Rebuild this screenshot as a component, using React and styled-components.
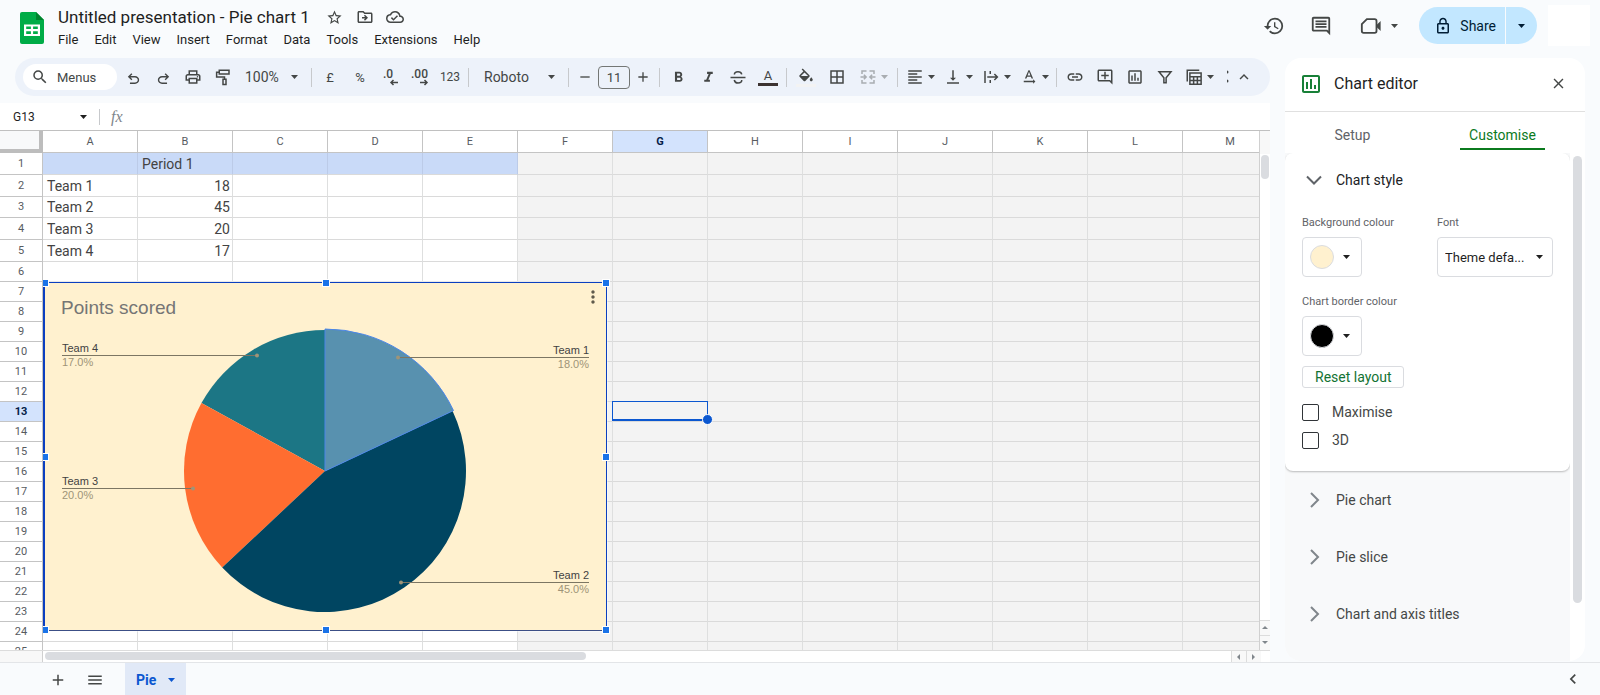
import React from 'react';
import styled, { createGlobalStyle } from 'styled-components';
import {
  MdStarBorder,
  MdOutlineDriveFileMove,
  MdOutlineCloudDone,
  MdSearch,
  MdOutlinePrint,
  MdFormatBold,
  MdFormatItalic,
  MdBorderAll,
  MdFormatAlignLeft,
  MdVerticalAlignBottom,
  MdTextRotationNone,
  MdLink,
  MdOutlineAddComment,
  MdOutlineInsertChart,
  MdHistory,
  MdOutlineComment,
  MdLockOutline,
  MdClose,
  MdAdd,
  MdRemove,
  MdMenu,
  MdMoreVert,
  MdKeyboardArrowUp,
  MdKeyboardArrowLeft,
} from 'react-icons/md';

const GlobalStyle = createGlobalStyle`
  * {
    box-sizing: border-box;
  }
  body {
    margin: 0;
    background: #f9fbfd;
    color: #1f1f1f;
    font-family: Roboto, "Liberation Sans", sans-serif;
    font-size: 13px;
  }
  button, input, select {
    font: inherit;
    color: inherit;
    margin: 0;
    padding: 0;
    border: none;
    background: none;
  }
  svg {
    display: block;
    flex: none;
  }
`

const Shell = styled.div`
  display: flex;
  flex-direction: column;
  height: 100vh;
  overflow: hidden;
`

/* ---------- top bar ---------- */

const Header = styled.header`
  display: flex;
  flex: none;
  height: 58px;
  padding: 4px 10px 0 20px;
`
const Logo = styled.a`
  padding-top: 8px;
  margin-right: 14px;
`
const TitleArea = styled.div`
  flex: 1;
`
const TitleRow = styled.div`
  display: flex;
  align-items: center;
  height: 26px;
`
const DocTitle = styled.h1`
  margin: 0 10px 0 0;
  font-size: 17px;
  font-weight: 400;
  line-height: 24px;
`
const TitleButton = styled.button`
  display: flex;
  justify-content: center;
  width: 30px;
  color: #444746;
`
const MenuBar = styled.nav`
  display: flex;
  gap: 16px;
  line-height: 20px;
`
const Actions = styled.div`
  display: flex;
  align-items: center;
  height: 43px;
`
const Action = styled.button`
  display: flex;
  align-items: center;
  justify-content: ${props => props.$menu ? 'flex-end' : 'center'};
  gap: 9px;
  width: ${props => props.$menu ? 54 : 47}px;
  color: #444746;
`
const Share = styled.div`
  display: flex;
  height: 37px;
  margin-left: 21px;
  border-radius: 19px;
  overflow: hidden;
  gap: 1px;
  color: #001d35;
  button {
    display: flex;
    align-items: center;
    background: #c2e7ff;
    font-size: 14px;
  }
  button:first-child {
    gap: 8px;
    padding: 0 9px 0 15px;
  }
  button:last-child {
    padding: 0 12px;
  }
`
const Account = styled.div`
  width: 42px;
  height: 41px;
  margin-left: 11px;
  background: #fff;
`

/* ---------- toolbar ---------- */

const Body = styled.div`
  display: flex;
  flex: 1;
  min-height: 0;
  gap: 15px;
  padding-right: 15px;
`
const Main = styled.main`
  display: flex;
  flex-direction: column;
  flex: 1;
  min-width: 0;
`
const Toolbar = styled.div`
  display: flex;
  flex: none;
  align-items: center;
  height: 38px;
  margin: 0 0 7px 15px;
  padding: 0 11px 0 8px;
  border-radius: 19px;
  background: #edf2fa;
  color: #444746;
`
const MenuSearch = styled.button`
  display: flex;
  align-items: center;
  gap: 8px;
  width: 94px;
  height: 26px;
  margin-right: 1px;
  padding-left: 8px;
  border-radius: 13px;
  background: #fff;
`
const Tool = styled.button`
  display: flex;
  align-items: center;
  justify-content: center;
  gap: 4px;
  width: ${props => props.$width || 30}px;
  height: 26px;
  font-size: ${props => props.$small ? 12 : 13}px;
  opacity: ${props => props.disabled ? 0.4 : 1};
`
const ColourTool = styled(Tool)`
  flex-direction: column;
  gap: 0;
  &::after {
    content: '';
    width: 20px;
    height: 3px;
    background: ${props => props.$colour};
  }
`
const Divider = styled.span`
  width: 1px;
  height: 19px;
  margin: 0 3px;
  background: #c7c9cc;
`
const SelectBox = styled.span`
  position: relative;
  display: flex;
  width: ${props => props.$width}px;
  select {
    width: 100%;
    height: ${props => props.$height || 26}px;
    padding-left: ${props => props.$pad}px;
    border: ${props => props.$framed ? '1px solid #dadce0' : 'none'};
    border-radius: 4px;
    font-size: ${props => props.$framed ? 13 : 14}px;
    appearance: none;
  }
  svg {
    position: absolute;
    top: calc(50% - 2px);
    right: 10px;
    pointer-events: none;
  }
`
const SizeInput = styled.input`
  width: 32px;
  height: 23px;
  border: 1px solid #747775;
  border-radius: 4px;
  text-align: center;
`
const ToolbarEnd = styled.div`
  display: flex;
  align-items: center;
  margin-left: auto;
`
const Clipped = styled.span`
  display: flex;
  width: 2px;
  height: 16px;
  overflow: hidden;
`

/* ---------- formula bar and grid ---------- */

const FormulaBar = styled.div`
  display: flex;
  flex: none;
  align-items: center;
  height: 27px;
  padding-left: 13px;
  background: #fff;
`
const NameBox = styled.input`
  width: 67px;
  font-size: 12px;
`
const FormulaLabel = styled.label`
  display: flex;
  flex: 1;
  align-items: center;
  height: 16px;
  margin-left: 12px;
  padding-left: 11px;
  border-left: 1px solid #c7c9cc;
  color: #80868b;
  font: italic 16px "Liberation Serif", serif;
  input {
    flex: 1;
    margin-left: 12px;
  }
`
const GridArea = styled.div`
  display: flex;
  flex: 1;
  min-height: 0;
  border-top: 1px solid #c0c0c0;
  background: #fff;
`
const GridView = styled.div`
  position: relative;
  flex: 1;
  overflow: hidden;
  border-right: 1px solid #d0d0d0;
`
const Sheet = styled.table`
  width: ${props => props.$width}px;
  table-layout: fixed;
  border-collapse: separate;
  border-spacing: 0;
`
const Corner = styled.td`
  height: 22px;
  padding: 0;
  border-right: 4px solid #bdbdbd;
  border-bottom: 4px solid #bdbdbd;
  background: #f8f9fa;
`
const HeadCell = styled.th`
  padding: 0;
  border-right: 1px solid #c4c4c4;
  border-bottom: 1px solid #c4c4c4;
  background: ${props => props.$active ? '#d3e3fd' : '#fff'};
  color: ${props => props.$active ? '#041e49' : '#575b5f'};
  font-size: 11px;
  font-weight: ${props => props.$active ? 700 : 400};
  line-height: 16px;
`
const Cell = styled.td`
  position: relative;
  padding: 0 2px 0 4px;
  border-right: 1px solid ${props => props.$fill === '#c9daf8' ? '#bccbe8' : '#dedfdf'};
  border-bottom: 1px solid #dadada;
  background: ${props => props.$fill};
  color: #434343;
  font-size: 14px;
  line-height: 16px;
  text-align: ${props => props.$number ? 'right' : 'left'};
  white-space: nowrap;
`
const Selection = styled.div`
  position: absolute;
  z-index: 1;
  inset: -1px -1px 0 -1px;
  border: 1px solid #0b57d0;
  border-bottom-width: 2px;
  &::after {
    content: '';
    position: absolute;
    right: -6px;
    bottom: -6px;
    width: 9px;
    height: 9px;
    border: 1px solid #fff;
    border-radius: 50%;
    background: #0b57d0;
  }
`
const VerticalTrack = styled.div`
  display: flex;
  flex-direction: column;
  width: 10px;
  border-top: 23px solid #f8f8f8;
`
const Thumb = styled.div`
  width: ${props => props.$width};
  height: ${props => props.$height};
  margin: ${props => props.$margin};
  border-radius: 5px;
  background: #dadce0;
`
const Steps = styled.div`
  display: flex;
  flex-direction: ${props => props.$column ? 'column' : 'row'};
  margin-${props => props.$column ? 'top' : 'left'}: auto;
  button {
    display: flex;
    align-items: center;
    justify-content: center;
    width: ${props => props.$column ? 10 : 15}px;
    height: ${props => props.$column ? 15 : 11}px;
    border: 1px solid #dcdcdc;
    border-width: ${props => props.$column ? '1px 0 0' : '0 0 0 1px'};
    background: #f8f8f8;
  }
`
const HorizontalTrack = styled.div`
  display: flex;
  flex: none;
  height: 12px;
  padding-right: 9px;
  border-top: 1px solid #dcdcdc;
  background: #fff;
`
const TrackCorner = styled.div`
  width: 43px;
  border-right: 1px solid #d0d0d0;
  background: #f8f8f8;
`

/* ---------- chart placed on the sheet ---------- */

const FloatLayer = styled.div`
  position: absolute;
  inset: 23px 0 0 43px;
  overflow: hidden;
  pointer-events: none;
`
const ChartFrame = styled.figure`
  position: absolute;
  top: 128px;
  left: 0;
  width: 564px;
  height: 349px;
  margin: 0;
  border: 1px solid #0b3fc0;
  border-left-width: 2px;
  border-bottom-color: #3c4f86;
  box-shadow: 0 0 0 1px #ffffff66;
  background: #fff1cf;
`
const Handle = styled.span`
  position: absolute;
  left: calc(${props => props.$x} - 4px);
  top: calc(${props => props.$y} - 4px);
  width: 8px;
  height: 8px;
  border: 1px solid #fff;
  background: #1a73e8;
`
const ChartMenu = styled.button`
  position: absolute;
  top: 4px;
  right: 3px;
  color: #5f5a4c;
`

/* ---------- chart editor ---------- */

const Panel = styled.aside`
  display: flex;
  flex-direction: column;
  flex: none;
  width: 300px;
  margin-bottom: 1px;
  border-radius: 16px;
  background: #fff;
  overflow: hidden;
`
const PanelHead = styled.div`
  display: flex;
  flex: none;
  align-items: center;
  height: 54px;
  padding: 0 18px 2px 14px;
  border-bottom: 1px solid #e0e0e0;
  color: #188038;
  h2 {
    flex: 1;
    margin: 0 0 0 11px;
    color: #1f1f1f;
    font-size: 16px;
    font-weight: 400;
  }
  button {
    color: #444746;
  }
`
const Tabs = styled.div`
  display: flex;
  flex: none;
  gap: 15px;
  height: 41px;
  padding-right: 15px;
`
const Tab = styled.button`
  flex: 1;
  padding-bottom: 3px;
  color: ${props => props.$active ? '#0b7a1e' : '#5f6368'};
  font-size: 14px;
  span {
    display: inline-block;
    padding: 15px 9px 5px;
    border-bottom: 2px solid ${props => props.$active ? '#0b7a1e' : 'transparent'};
    line-height: 16px;
  }
`
const PanelScroll = styled.div`
  display: flex;
  flex: 1;
  min-height: 0;
`
const Sections = styled.div`
  flex: 1;
  overflow: hidden;
  background: #f8f9fa;
`
const Card = styled.section`
  padding: 0 17px 17px;
  border-radius: 8px;
  background: #fff;
  box-shadow: 0 1px 2px #00000040;
`
const SectionButton = styled.button`
  display: flex;
  align-items: center;
  gap: 14px;
  width: 100%;
  height: ${props => props.$open ? 53 : 57}px;
  padding-left: ${props => props.$open ? 4 : 21}px;
  color: ${props => props.$open ? '#202124' : '#444746'};
  font-size: 14px;
`
const Fields = styled.div`
  display: grid;
  grid-template-columns: 1fr 116px;
  row-gap: 17px;
  padding-top: 9px;
`
const Field = styled.div`
  display: flex;
  flex-direction: column;
  gap: 6px;
  label {
    color: #5f6368;
    font-size: 11px;
    line-height: 16px;
  }
`
const Swatch = styled.button`
  display: flex;
  align-items: center;
  justify-content: space-between;
  width: 60px;
  height: 40px;
  padding: 0 11px 0 7px;
  border: 1px solid #dadce0;
  border-radius: 4px;
  &::before {
    content: '';
    width: 22px;
    height: 22px;
    border: 1px solid #dadce0;
    border-radius: 50%;
    background: ${props => props.$colour};
  }
`
const ResetButton = styled.button`
  height: 22px;
  margin: 10px 0;
  padding: 0 12px;
  border: 1px solid #dadce0;
  border-radius: 3px;
  color: #137333;
  font-size: 14px;
  line-height: 18px;
`
const CheckRow = styled.label`
  display: flex;
  align-items: center;
  gap: 13px;
  height: 28px;
  color: #444746;
  font-size: 14px;
  input {
    width: 17px;
    height: 17px;
    border: 1px solid #303438;
    border-radius: 2px;
    appearance: none;
  }
`

/* ---------- sheet tabs ---------- */

const Footer = styled.footer`
  display: flex;
  flex: none;
  align-items: center;
  height: 33px;
  padding: 0 17px 0 39px;
  border-top: 1px solid #e3e5e8;
  color: #444746;
`
const FootButton = styled.button`
  display: flex;
  justify-content: center;
  width: 37px;
  padding-top: 2px;
`
const SheetTab = styled.button`
  display: flex;
  align-items: center;
  gap: 12px;
  align-self: stretch;
  margin: 0 auto 0 12px;
  padding: 2px 11px 0;
  background: #e1e9f7;
  color: #0b57d0;
  font-size: 14px;
  font-weight: 700;
`

const Caret = () => (
  <svg width="7" height="4" viewBox="0 0 7 4" fill="currentColor"><path d="M0 0h7L3.500 4z" /></svg>
);

// 24px outline drawings that the icon set has no match for
const Stroke = ({ size = 18, width = 2, children }) => (
  <svg width={size} height={size} viewBox="0 0 24 24" fill="none" stroke="currentColor" strokeWidth={width}>
    {children}
  </svg>
);

const SheetsLogo = () => (
  <svg width="24" height="33" viewBox="0 0 24 33">
    <path d="M2 0h14l8 8v22a2 2 0 0 1-2 2H2a2 2 0 0 1-2-2V2a2 2 0 0 1 2-2z" fill="#00ac47" />
    <path d="M16 0l8 8h-8z" fill="#00832d" />
    <path d="M4 12.500h16v11.500H4zM6.200 14.500v2.600h4.700v-2.600zM13.100 14.500v2.600h4.700v-2.600zM6.200 19.300v2.600h4.700v-2.600zM13.100 19.300v2.600h4.700v-2.600z" fill="#fff" fillRule="evenodd" />
  </svg>
);

const UndoIcon = () => (
  <svg width="17" height="17" viewBox="0 -1040 960 960" fill="currentColor">
    <path d="M280-200v-80h284q63 0 109.500-40T720-420q0-60-46.500-100T564-560H312l104 104-56 56-200-200 200-200 56 56-104 104h252q97 0 169.500 63T800-420q0 94-72.500 157T564-200H280Z" />
  </svg>
);

const RedoIcon = () => (
  <svg width="17" height="17" viewBox="0 -1040 960 960" fill="currentColor">
    <path d="M680-200v-80H396q-63 0-109.500-40T240-420q0-60 46.500-100T396-560h252L544-456l56 56 200-200-200-200-56 56 104 104H396q-97 0-169.500 63T160-420q0 94 72.500 157T396-200h284Z" />
  </svg>
);

const PaintIcon = () => (
  <Stroke>
    <path d="M7 3h13v5H7zM7 5.500H3.500V12H14v3M12 15h4v7h-4z" />
  </Stroke>
);

const DecimalIcon = ({ digits, right }) => (
  <svg width="20" height="20" viewBox="0 0 20 20">
    <text x={right ? 1 : 3} y="11" fontSize="12" fontWeight="500" fill="currentColor">{digits}</text>
    <path
      d={right ? 'M10 15.500h7M14.500 13l2.500 2.500-2.500 2.500' : 'M11 15.500h7M13.500 13L11 15.500l2.500 2.500'}
      fill="none" stroke="currentColor" strokeWidth="1.500"
    />
  </svg>
);

const StrikeIcon = () => (
  <Stroke>
    <path d="M2 12.500h20M17 8.500c-.5-2.300-2.300-3.500-5-3.500-3 0-4.800 1.500-4.800 3.800M7 16c.5 2.500 2.300 4 5 4 3 0 5-1.500 5-4" />
  </Stroke>
);

const FillIcon = () => (
  <svg width="18" height="16" viewBox="0 0 24 20" fill="currentColor">
    <path d="M16.560 8.940L7.620 0 6.210 1.410l2.380 2.380-5.150 5.150a1.490 1.490 0 0 0 0 2.120l5.500 5.500c.29.29.68.44 1.060.44s.77-.15 1.060-.44l5.500-5.500c.59-.58.59-1.530 0-2.120zM5.210 10L10 5.210 14.790 10zM19 11.500s-2 2.170-2 3.500c0 1.100.9 2 2 2s2-.9 2-2c0-1.330-2-3.500-2-3.500z" />
  </svg>
);

const MergeIcon = () => (
  <Stroke>
    <path d="M10 4H4v4M4 16v4h6M14 4h6v4M20 16v4h-6M2 12h7M15 12h7M6.500 9l3 3-3 3M17.500 9l-3 3 3 3" />
  </Stroke>
);

const WrapIcon = () => (
  <Stroke>
    <path d="M4 4v16M11 4v4M11 16v4M7 12h13M16.500 8l4 4-4 4" />
  </Stroke>
);

const FilterIcon = () => (
  <Stroke>
    <path d="M4 5h16l-6.500 8v6.500h-3V13z" />
  </Stroke>
);

const TableIcon = () => (
  <Stroke>
    <path d="M3 18V3h16M6.500 6.500h15v15h-15zM6.500 11.500h15M6.500 16.500h15M11.500 11.500v10M16.500 11.500v10" />
  </Stroke>
);

const VideoIcon = () => (
  <svg width="22" height="22" viewBox="0 0 24 24">
    <path d="M7.500 4.500H16a2 2 0 0 1 2 2v11a2 2 0 0 1-2 2H4a2 2 0 0 1-2-2V10z" fill="none" stroke="currentColor" strokeWidth="2" />
    <path d="M18 11l4.500-4.500v11L18 13z" fill="currentColor" />
  </svg>
);

const Chevron = ({ open }) => (
  <svg width="16" height="16" viewBox="0 0 16 16" fill="none" stroke={open ? '#5f6368' : '#80868b'} strokeWidth="2">
    <path d={open ? 'M1 4.500l7 7 7-7' : 'M5 1l7 7-7 7'} />
  </svg>
);

const Arrow = ({ dir }) => {
  const paths = {
    up: 'M0 4l3-3 3 3z',
    down: 'M0 1l3 3 3-3z',
    left: 'M4 0L1 3l3 3z',
    right: 'M1 0l3 3-3 3z',
  };
  return <svg width="6" height="6" viewBox="0 0 6 6" fill="#80868b"><path d={paths[dir]} /></svg>;
};

const COLUMNS = 'ABCDEFGHIJKLM'.split('');
const ROWS = Array.from({ length: 25 }, (_, i) => i + 1);
const ROW_HEIGHTS = { 1: 22, 2: 22, 3: 21, 4: 22, 5: 22 };

const VALUES = {
  B1: 'Period 1',
  A2: 'Team 1', B2: 18,
  A3: 'Team 2', B3: 45,
  A4: 'Team 3', B4: 20,
  A5: 'Team 4', B5: 17,
};

const SLICES = [
  { name: 'Team 1', value: 18, fill: '#5891af', dotX: 353, y: 75, right: true },
  { name: 'Team 2', value: 45, fill: '#004561', dotX: 356, y: 300, right: true },
  { name: 'Team 3', value: 20, fill: '#ff6d30', dotX: 148, y: 206 },
  { name: 'Team 4', value: 17, fill: '#1c7685', dotX: 212, y: 73 },
];

const cellFill = (col, row) => {
  if (col > 4) return '#f3f3f3';
  return row === 1 ? '#c9daf8' : '#fff';
};

const slicePath = (from, to, r) => {
  const point = share => {
    const angle = share / 100 * 2 * Math.PI;
    return `${280 + r * Math.sin(angle)} ${188 - r * Math.cos(angle)}`;
  };
  return `M280 188L${point(from)}A${r} ${r} 0 0 1 ${point(to)}Z`;
};

const PieChart = () => {
  let start = 0;
  const slices = SLICES.map(slice => {
    const from = start;
    start += slice.value;
    return { ...slice, from, to: start };
  });
  return (
    <svg width="561" height="347" viewBox="0 0 561 347" fontFamily="Liberation Sans, Arial, sans-serif" role="img" aria-label="Points scored">
      <text x="16" y="31" fontSize="19" fill="#757575">Points scored</text>
      {slices.slice().reverse().map(s => (
        <path
          key={s.name}
          d={slicePath(s.from, s.to, s.from === 0 ? 142 : 141)}
          fill={s.fill}
          stroke={s.from === 0 ? '#4c86e8' : 'none'}
        />
      ))}
      {slices.map(s => {
        const edge = s.right ? 544 : 17;
        const anchor = s.right ? 'end' : 'start';
        return (
          <g key={s.name} fontSize="11" textAnchor={anchor}>
            <path d={`M${edge} ${s.y - 0.5}H${s.dotX}`} stroke="#7c7663" />
            <circle cx={s.dotX} cy={s.y - 0.5} r="2" fill="#9e9478" />
            <text x={edge} y={s.y - 4} fill="#424242">{s.name}</text>
            <text x={edge} y={s.y + 10} fill="#9e9478">{s.value.toFixed(1)}%</text>
          </g>
        );
      })}
    </svg>
  );
}

const Chart = () => (
  <FloatLayer>
    <ChartFrame>
      <PieChart />
      <ChartMenu aria-label="Chart options"><MdMoreVert size={20} /></ChartMenu>
      {['0%', '50%', '100%'].map(y => ['0%', '50%', '100%'].map(x => (
        x === '50%' && y === '50%' ? null : <Handle key={x + y} $x={x} $y={y} />
      )))}
    </ChartFrame>
  </FloatLayer>
);

const Spreadsheet = () => (
  <GridArea>
    <GridView>
      <Sheet $width={43 + COLUMNS.length * 95}>
        <colgroup>
          <col width="43" />
          {COLUMNS.map(c => <col key={c} width="95" />)}
        </colgroup>
        <thead>
          <tr>
            <Corner />
            {COLUMNS.map(c => <HeadCell key={c} scope="col" $active={c === 'G'}>{c}</HeadCell>)}
          </tr>
        </thead>
        <tbody>
          {ROWS.map(row => (
            <tr key={row} height={ROW_HEIGHTS[row] || 20}>
              <HeadCell scope="row" $active={row === 13}>{row}</HeadCell>
              {COLUMNS.map((c, i) => {
                const value = VALUES[c + row];
                return (
                  <Cell key={c} $fill={cellFill(i, row)} $number={typeof value === 'number'}>
                    {value}
                    {c === 'G' && row === 13 && <Selection />}
                  </Cell>
                );
              })}
            </tr>
          ))}
        </tbody>
      </Sheet>
      <Chart />
    </GridView>
    <VerticalTrack>
      <Thumb $width="8px" $height="24px" $margin="1px" />
      <Steps $column>
        <button aria-label="Scroll up"><Arrow dir="up" /></button>
        <button aria-label="Scroll down"><Arrow dir="down" /></button>
      </Steps>
    </VerticalTrack>
  </GridArea>
);

const MENUS = ['File', 'Edit', 'View', 'Insert', 'Format', 'Data', 'Tools', 'Extensions', 'Help'];

const TopBar = () => (
  <Header>
    <Logo href="#" aria-label="Sheets home"><SheetsLogo /></Logo>
    <TitleArea>
      <TitleRow>
        <DocTitle>Untitled presentation - Pie chart 1</DocTitle>
        <TitleButton aria-label="Star"><MdStarBorder size={17} /></TitleButton>
        <TitleButton aria-label="Move"><MdOutlineDriveFileMove size={18} /></TitleButton>
        <TitleButton aria-label="Saved to Drive"><MdOutlineCloudDone size={18} /></TitleButton>
      </TitleRow>
      <MenuBar>
        {MENUS.map(m => <button key={m}>{m}</button>)}
      </MenuBar>
    </TitleArea>
    <Actions>
      <Action aria-label="Version history"><MdHistory size={22} /></Action>
      <Action aria-label="Comments"><MdOutlineComment size={22} /></Action>
      <Action aria-label="Join a call" $menu><VideoIcon /><Caret /></Action>
      <Share>
        <button><MdLockOutline size={18} />Share</button>
        <button aria-label="Sharing options"><Caret /></button>
      </Share>
      <Account />
    </Actions>
  </Header>
);

const MainToolbar = () => (
  <Toolbar role="toolbar">
    <MenuSearch><MdSearch size={18} />Menus</MenuSearch>
    <Tool aria-label="Undo"><UndoIcon /></Tool>
    <Tool aria-label="Redo"><RedoIcon /></Tool>
    <Tool aria-label="Print"><MdOutlinePrint size={18} /></Tool>
    <Tool aria-label="Paint format"><PaintIcon /></Tool>
    <SelectBox $width={70} $pad={7}>
      <select aria-label="Zoom"><option>100%</option></select>
      <Caret />
    </SelectBox>
    <Divider />
    <Tool>£</Tool>
    <Tool>%</Tool>
    <Tool aria-label="Decrease decimal places"><DecimalIcon digits=".0" /></Tool>
    <Tool aria-label="Increase decimal places"><DecimalIcon digits=".00" right /></Tool>
    <Tool $small>123</Tool>
    <Divider />
    <SelectBox $width={93} $pad={12}>
      <select aria-label="Font"><option>Roboto</option></select>
      <Caret />
    </SelectBox>
    <Divider />
    <Tool aria-label="Decrease font size" $width={26}><MdRemove size={16} /></Tool>
    <SizeInput aria-label="Font size" defaultValue="11" />
    <Tool aria-label="Increase font size" $width={26}><MdAdd size={16} /></Tool>
    <Divider />
    <Tool aria-label="Bold"><MdFormatBold size={17} /></Tool>
    <Tool aria-label="Italic"><MdFormatItalic size={17} /></Tool>
    <Tool aria-label="Strikethrough"><StrikeIcon /></Tool>
    <ColourTool $colour="#3c3331">A</ColourTool>
    <Divider />
    <ColourTool aria-label="Fill colour" $colour="#f3f3f3" $width={32}><FillIcon /></ColourTool>
    <Tool aria-label="Borders"><MdBorderAll size={18} /></Tool>
    <Tool aria-label="Merge cells" $width={42} disabled><MergeIcon /><Caret /></Tool>
    <Divider />
    <Tool aria-label="Horizontal align" $width={38}><MdFormatAlignLeft size={18} /><Caret /></Tool>
    <Tool aria-label="Vertical align" $width={38}><MdVerticalAlignBottom size={18} /><Caret /></Tool>
    <Tool aria-label="Text wrapping" $width={38}><WrapIcon /><Caret /></Tool>
    <Tool aria-label="Text rotation" $width={38}><MdTextRotationNone size={18} /><Caret /></Tool>
    <Divider />
    <Tool aria-label="Insert link"><MdLink size={18} /></Tool>
    <Tool aria-label="Insert comment"><MdOutlineAddComment size={18} /></Tool>
    <Tool aria-label="Insert chart"><MdOutlineInsertChart size={18} /></Tool>
    <Tool aria-label="Create a filter"><FilterIcon /></Tool>
    <Tool aria-label="Filter views" $width={38}><TableIcon /><Caret /></Tool>
    <ToolbarEnd>
      <Clipped>
        <svg width="4" height="16" viewBox="0 0 4 16" fill="currentColor">
          <circle cx="0" cy="3" r="1.500" /><circle cx="0" cy="12" r="1.500" />
        </svg>
      </Clipped>
      <Tool aria-label="Hide the menus"><MdKeyboardArrowUp size={18} /></Tool>
    </ToolbarEnd>
  </Toolbar>
);

const ChartEditor = () => (
  <Panel>
    <PanelHead>
      <MdOutlineInsertChart size={24} />
      <h2>Chart editor</h2>
      <button aria-label="Close"><MdClose size={17} /></button>
    </PanelHead>
    <Tabs>
      <Tab><span>Setup</span></Tab>
      <Tab $active><span>Customise</span></Tab>
    </Tabs>
    <PanelScroll>
      <Sections>
        <Card>
          <SectionButton $open><Chevron open />Chart style</SectionButton>
          <Fields>
            <Field>
              <label htmlFor="background">Background colour</label>
              <Swatch id="background" $colour="#fff1cf"><Caret /></Swatch>
            </Field>
            <Field>
              <label htmlFor="font">Font</label>
              <SelectBox $width={116} $height={40} $pad={7} $framed>
                <select id="font"><option>Theme defa...</option></select>
                <Caret />
              </SelectBox>
            </Field>
            <Field>
              <label htmlFor="border">Chart border colour</label>
              <Swatch id="border" $colour="#000"><Caret /></Swatch>
            </Field>
          </Fields>
          <ResetButton>Reset layout</ResetButton>
          <CheckRow><input type="checkbox" />Maximise</CheckRow>
          <CheckRow><input type="checkbox" />3D</CheckRow>
        </Card>
        {['Pie chart', 'Pie slice', 'Chart and axis titles'].map(name => (
          <SectionButton key={name}><Chevron />{name}</SectionButton>
        ))}
      </Sections>
      <Thumb $width="9px" $height="88%" $margin="3px 3px 0" />
    </PanelScroll>
  </Panel>
);

export default function App() {
  return (
    <Shell>
      <GlobalStyle />
      <TopBar />
      <Body>
        <Main>
          <MainToolbar />
          <FormulaBar>
            <NameBox aria-label="Name box" defaultValue="G13" />
            <Caret />
            <FormulaLabel>fx<input /></FormulaLabel>
          </FormulaBar>
          <Spreadsheet />
          <HorizontalTrack>
            <TrackCorner />
            <Thumb $width="541px" $height="8px" $margin="1px 2px" />
            <Steps>
              <button aria-label="Scroll left"><Arrow dir="left" /></button>
              <button aria-label="Scroll right"><Arrow dir="right" /></button>
            </Steps>
          </HorizontalTrack>
        </Main>
        <ChartEditor />
      </Body>
      <Footer>
        <FootButton aria-label="Add sheet"><MdAdd size={18} /></FootButton>
        <FootButton aria-label="All sheets"><MdMenu size={18} /></FootButton>
        <SheetTab>Pie<Caret /></SheetTab>
        <button aria-label="Show side panel"><MdKeyboardArrowLeft size={20} /></button>
      </Footer>
    </Shell>
  );
}
